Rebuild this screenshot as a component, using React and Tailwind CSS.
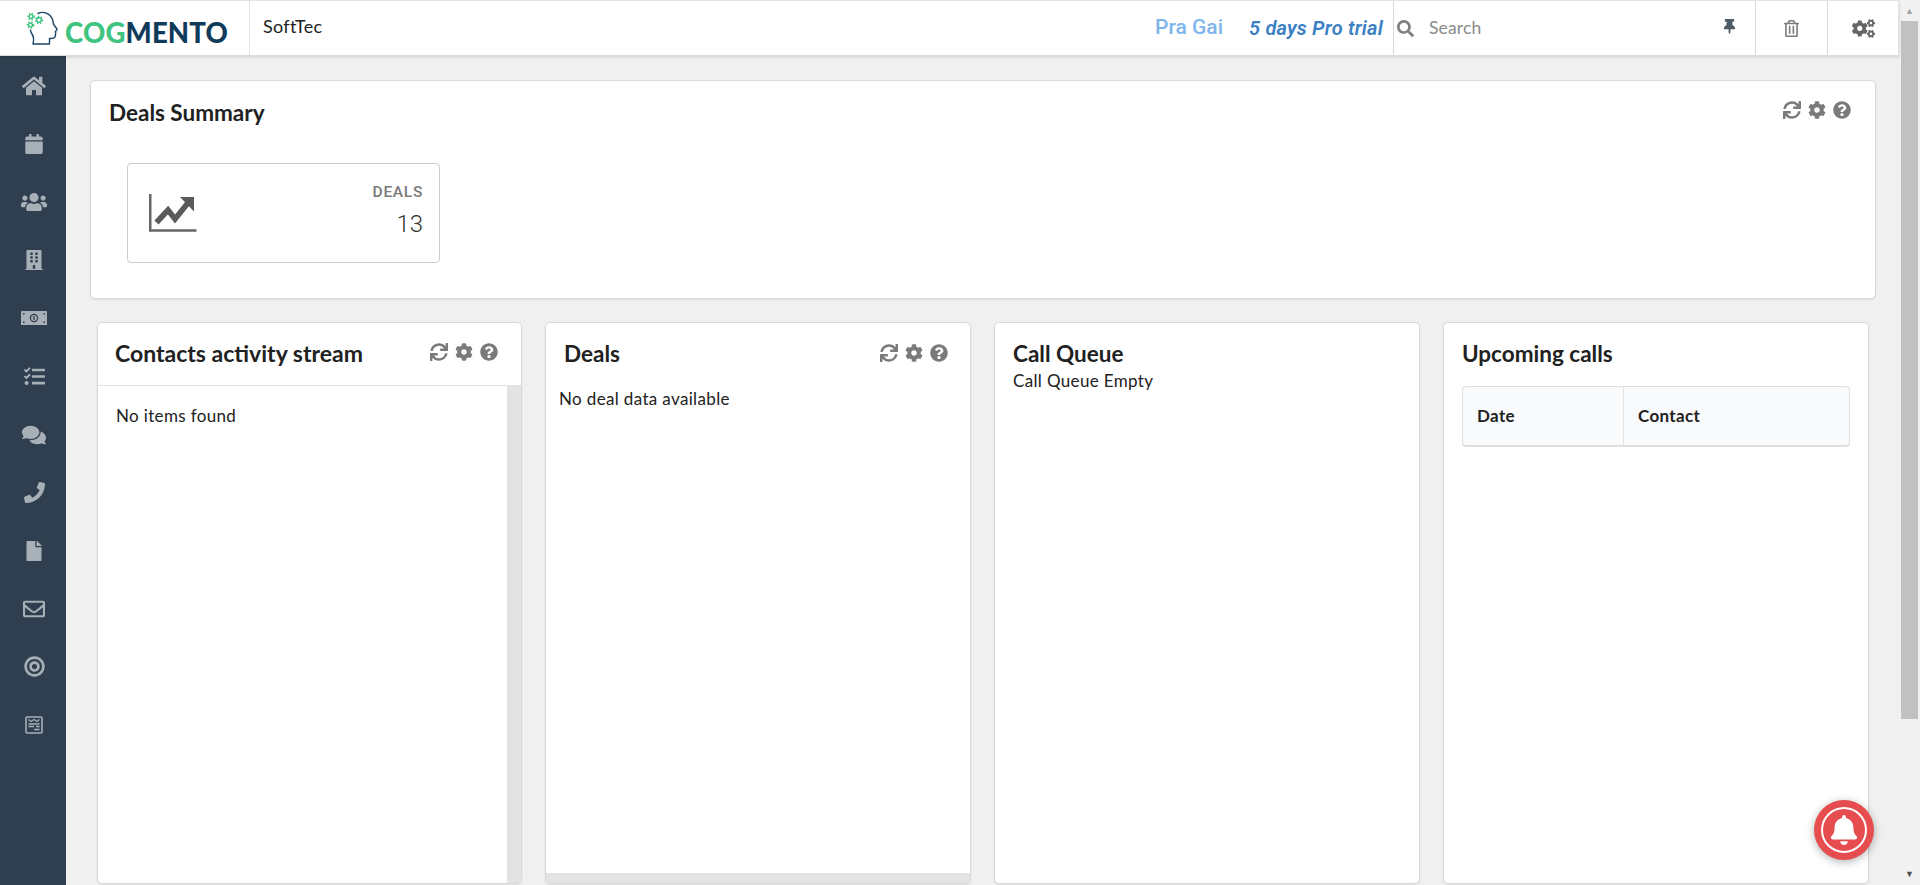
import React from 'react';
import {
  FaHome, FaCalendar, FaUsers, FaBuilding, FaTasks, FaComments, FaPhone, FaFile,
  FaRegEnvelope, FaBullseye, FaSync, FaCog, FaQuestionCircle,
  FaThumbtack, FaRegTrashAlt, FaCogs, FaSearch, FaBell,
} from 'react-icons/fa';

// Money note, shorter than the package's one
const MoneyIcon = () => (
  <svg width="26" height="14" viewBox="0 0 26 14">
    <rect width="26" height="14" rx="0.5" fill="currentColor" />
    <circle cx="13" cy="7" r="3.6" fill="none" stroke="#2f3f4f" strokeWidth="1.2" />
    <rect x="12.4" y="5" width="1.3" height="4" fill="#2f3f4f" />
    <rect x="2" y="2" width="1.5" height="1.5" fill="#2f3f4f" />
    <rect x="22.5" y="2" width="1.5" height="1.5" fill="#2f3f4f" />
    <rect x="2" y="10.5" width="1.5" height="1.5" fill="#2f3f4f" />
    <rect x="22.5" y="10.5" width="1.5" height="1.5" fill="#2f3f4f" />
  </svg>
);

const FormIcon = () => (
  <svg width="18" height="18" viewBox="0 0 18 18" fill="none" stroke="currentColor">
    <rect x="1" y="1" width="16" height="16" rx="1" strokeWidth="1.6" />
    <path d="M3.5 3.5 L6 5.5 L9 3.5 L12 5.5 L14.5 3.5" strokeWidth="1.2" />
    <path d="M3.5 8 H14.5 M3.5 10.5 H9 M11 10.5 H14.5 M9 13.5 H14.5" strokeWidth="1.4" />
  </svg>
);

const navIcons = [
  <FaHome size={24} />,
  <FaCalendar size={20} />,
  <FaUsers size={26} />,
  <FaBuilding size={20} />,
  <MoneyIcon />,
  <FaTasks size={21} />,
  <FaComments size={24} />,
  <FaPhone size={21} />,
  <FaFile size={20} />,
  <FaRegEnvelope size={22} />,
  <FaBullseye size={21} />,
  <FormIcon />,
];

const Gear = ({ cx, cy, r }) => (
  <g fill="none" stroke="#3fc380">
    <circle cx={cx} cy={cy} r={r} strokeWidth="1.4" />
    <circle cx={cx} cy={cy} r={r + 1.2} strokeWidth="1.4" strokeDasharray="1.4 1.6" />
  </g>
);

const Logo = () => (
  <div className="flex items-center w-[250px] h-full pl-[26px] border-r border-[#e3e3e3] shrink-0">
    <svg width="40" height="36" viewBox="0 0 40 36" className="shrink-0">
      <path d="M12 3.5 C17 1 24 3 26.5 9.5 C27.5 12 27 14 28 15 L31 19 C31.5 20.5 29.5 20.5 29.5 21.5 C30 23 29.5 25 29 27 C28 29 25 28.5 23.5 28.5 L23.5 34 L7 34 C8 30 8 27 6 24 C5 22.5 4.5 21 4.5 20" fill="none" stroke="#1d4565" strokeWidth="1.4" strokeLinejoin="round" strokeLinecap="round" />
      <Gear cx={5} cy={6.5} r={1.9} />
      <Gear cx={13} cy={10} r={2.3} />
      <Gear cx={4.5} cy={15} r={1.9} />
    </svg>
    <span className="font-['Lato'] font-black text-[27.5px] leading-none tracking-[0.2px] -ml-[1px] mt-[10px]">
      <span className="text-[#3fc380]">COG</span>
      <span className="text-[#0f3a5a]">MENTO</span>
    </span>
  </div>
);

const Header = () => (
  <header className="flex items-stretch h-[56px] shrink-0 bg-white border-t border-[#e3e3e3] border-b border-b-[#dcdcdc] border-r border-r-[#e3e3e3] shadow-[0_1px_3px_rgba(0,0,0,0.15)] relative z-10 font-['Lato']">
    <Logo />
    <div className="flex items-center pl-[13px] text-[18px] tracking-[0.3px] text-[#212121] -mt-[3px]">SoftTec</div>
    <div className="ml-auto flex items-center font-['Roboto'] text-[21px] font-medium text-[#7db5ec] -mt-[1px]">Pra Gai</div>
    <div className="flex items-center ml-[26px] w-[144px] font-['Roboto'] text-[20px] font-semibold italic text-[#3b7fc4] tracking-[0.2px] shrink-0 -mt-[1px]">5 days Pro trial</div>
    <div className="flex items-center w-[362px] pl-[3px] pr-[18px] border-l border-[#d8d8d8] shrink-0">
      <FaSearch className="text-[#808080] text-[17px]" />
      <span className="ml-[15px] text-[17.5px] tracking-[0.15px] text-[#8a8a8a]">Search</span>
      <FaThumbtack className="ml-auto text-[#4d5b66] text-[15px] -mt-[3px]" />
    </div>
    <div className="flex items-center justify-center w-[72px] border-l border-[#d8d8d8] shrink-0">
      <FaRegTrashAlt className="text-[#7a7a7a] text-[17px]" />
    </div>
    <div className="flex items-center justify-center w-[71px] border-l border-[#d8d8d8] shrink-0">
      <FaCogs className="text-[#666666] text-[23px]" />
    </div>
  </header>
);

const Sidebar = () => (
  <nav className="w-[66px] shrink-0 bg-[#2f3f4f] flex flex-col items-center pl-[2px] pt-[1px]">
    {navIcons.map((icon, i) => (
      <div key={i} className="h-[58.1px] w-full flex items-center justify-center text-[#a7afb7]">
        {icon}
      </div>
    ))}
  </nav>
);

const PanelTools = () => (
  <div className="flex items-center gap-[7px] text-[#7a7a7a] text-[18px]">
    <FaSync />
    <FaCog />
    <FaQuestionCircle />
  </div>
);

const panelClass = "bg-white rounded-[5px] border border-[#d9d9d9] shadow-[0_1px_2px_rgba(0,0,0,0.08)] flex flex-col";

const Panels = () => (
  <div className="grid grid-cols-[425px_1fr_1fr_1fr] gap-[23px] px-[7px] pt-[23px] h-[585px] font-['Lato'] text-[17px] tracking-[0.35px] text-[#212121]">
    <section className={panelClass}>
      <div className="flex items-center justify-between h-[63px] pl-[17px] pr-[23px] border-b border-[#e3e3e3]">
        <h3 className="font-bold text-[23px] tracking-normal -mt-[2px]">Contacts activity stream</h3>
        <div className="-mt-[4px]"><PanelTools /></div>
      </div>
      <div className="flex flex-1">
        <p className="flex-1 pl-[18px] pt-[17px]">No items found</p>
        <div className="w-[14px] bg-[#e3e3e3]" />
      </div>
    </section>
    <section className={panelClass}>
      <div className="flex items-center justify-between h-[63px] pl-[18px] pr-[22px]">
        <h3 className="font-bold text-[22.5px] tracking-normal -mt-[2px]">Deals</h3>
        <div className="-mt-[4px]"><PanelTools /></div>
      </div>
      <p className="flex-1 pl-[13px]">No deal data available</p>
      <div className="h-[10px] bg-[#e3e3e3]" />
    </section>
    <section className={`${panelClass} px-[18px]`}>
      <h3 className="font-bold text-[22.5px] tracking-normal pt-[17px] leading-[28px]">Call Queue</h3>
      <p className="leading-[24px] mt-[1px]">Call Queue Empty</p>
    </section>
    <section className={`${panelClass} px-[18px]`}>
      <h3 className="font-bold text-[22.5px] tracking-normal pt-[17px] leading-[28px]">Upcoming calls</h3>
      <div className="mt-[18px] flex h-[61px] bg-[#f9fafb] border border-[#dedede] border-b-[2px] rounded-[4px] font-bold">
        <div className="w-[161px] flex items-center pl-[14px] border-r border-[#e3e3e3]">Date</div>
        <div className="flex-1 flex items-center pl-[14px]">Contact</div>
      </div>
    </section>
  </div>
);

const ChartIcon = () => (
  <svg width="48" height="38" viewBox="0 0 48 38" fill="none">
    <path d="M1.2 0 V36.5 H47.5" stroke="#666666" strokeWidth="2.6" />
    <path d="M7.5 28.5 L19 16 L26 25 L38.5 9.5" stroke="#5a5a5a" strokeWidth="5.6" />
    <polygon points="45,3 45,17.5 31,3" fill="#5a5a5a" />
  </svg>
);

const DealsSummary = () => (
  <section className="bg-white rounded-[5px] border border-[#d9d9d9] shadow-[0_1px_2px_rgba(0,0,0,0.08)] h-[219px] px-[18px] pt-[19px]">
    <div className="flex items-start justify-between pr-[6px]">
      <h3 className="font-['Lato'] font-bold text-[22.5px] leading-[26px] text-[#212121]">Deals Summary</h3>
      <div className="mt-[1px]"><PanelTools /></div>
    </div>
    <div className="mt-[37px] ml-[18px] w-[313px] h-[100px] rounded-[4px] border border-[#cccccc] flex items-center justify-between pl-[21px] pr-[16px]">
      <ChartIcon />
      <div className="text-right font-['Roboto'] -mt-[6px]">
        <div className="text-[15.5px] leading-[18px] font-medium text-[#7a7a7a] tracking-[0.7px]">DEALS</div>
        <div className="text-[24px] leading-[28px] font-light text-[#333333] mt-[9px]">13</div>
      </div>
    </div>
  </section>
);

const PageScrollbar = () => (
  <div className="w-[21px] shrink-0 flex flex-col items-center bg-[#f1f1f1] relative">
    <div className="h-[21px] flex items-center justify-center text-[9px] text-[#a3a3a3] leading-none">▲</div>
    <div className="w-[17px] h-[698px] bg-[#c1c1c1]" />
    <div className="mt-auto h-[24px] flex items-center justify-center text-[9px] text-[#505050] leading-none">▼</div>
  </div>
);

export default function App() {
  return (
    <div className="flex h-screen overflow-hidden bg-[#f0f0f0]">
      <div className="flex-1 min-w-0 flex flex-col">
        <Header />
        <div className="flex flex-1 min-h-0">
          <Sidebar />
          <main className="flex-1 min-w-0 pl-[24px] pr-[23px] pt-[24px]">
            <DealsSummary />
            <Panels />
          </main>
        </div>
      </div>
      <PageScrollbar />
      {/* notification bell */}
      <button className="fixed left-[1814px] bottom-[25px] w-[60px] h-[60px] rounded-full bg-[#e64d4f] shadow-[0_2px_8px_rgba(0,0,0,0.3)] flex items-center justify-center">
        <span className="w-[46px] h-[46px] rounded-full border-[2px] border-white flex items-center justify-center">
          <FaBell className="text-white text-[30px]" />
        </span>
      </button>
    </div>
  );
}
